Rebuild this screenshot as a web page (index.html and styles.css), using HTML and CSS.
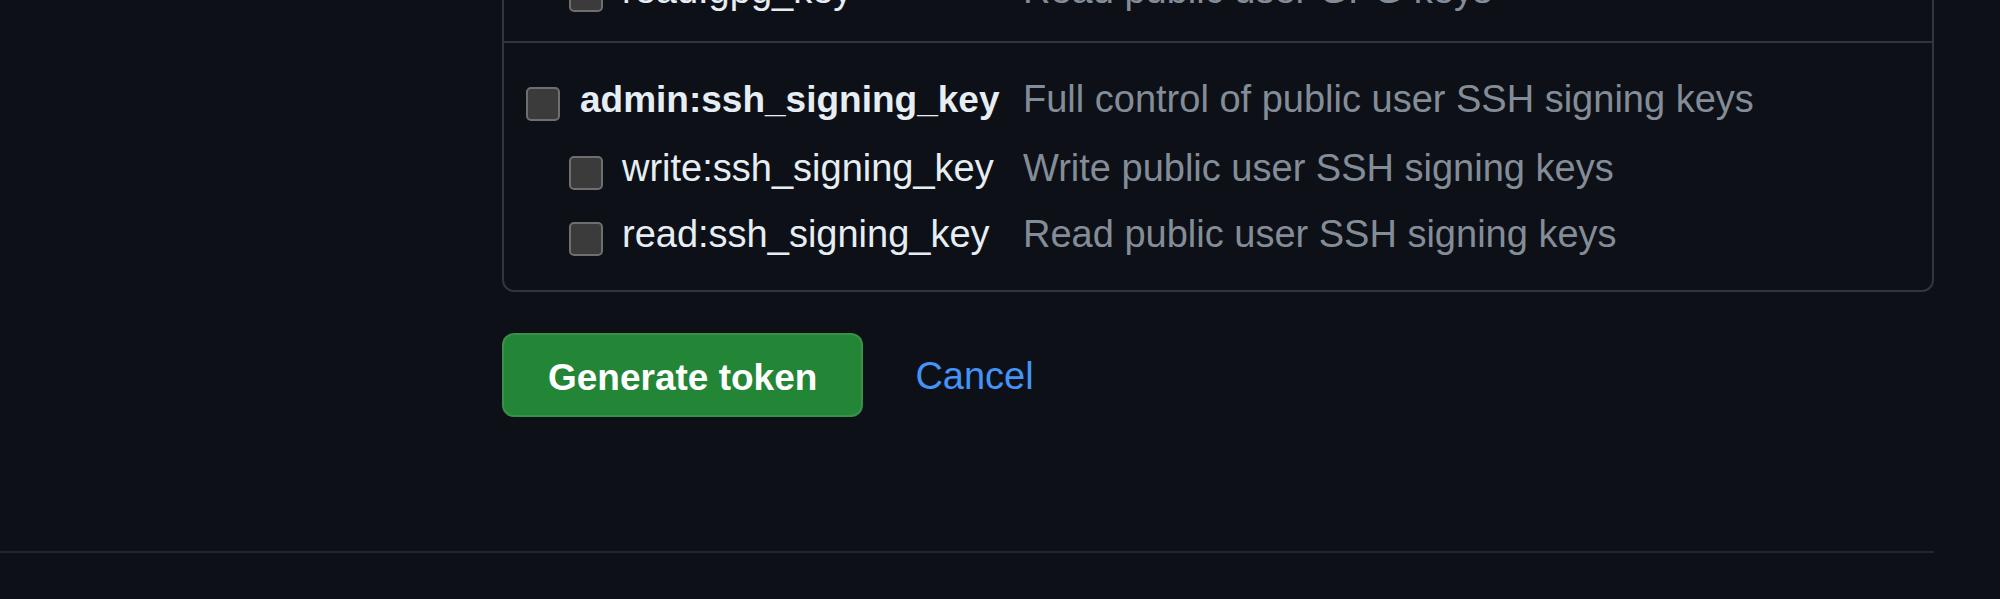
FILE: index.html
```html
<!DOCTYPE html>
<html lang="en">
<head>
<meta charset="utf-8">
<title>New personal access token</title>
<link rel="stylesheet" href="styles.css">
</head>
<body>
<div class="page">
  <div class="layout">
    <aside class="sidebar"></aside>
    <main class="content">
      <div class="scopes">
        <div class="scope-group">
          <div class="scope-row parent">
            <div class="name-col"><input type="checkbox" class="cb"><span class="name">admin:gpg_key</span></div>
            <span class="desc">Full control of public user GPG keys</span>
          </div>
          <div class="children">
            <div class="scope-row child">
              <div class="name-col"><input type="checkbox" class="cb"><span class="name">write:gpg_key</span></div>
              <span class="desc">Write public user GPG keys</span>
            </div>
            <div class="scope-row child">
              <div class="name-col"><input type="checkbox" class="cb"><span class="name">read:gpg_key</span></div>
              <span class="desc">Read public user GPG keys</span>
            </div>
          </div>
        </div>
        <div class="scope-group last">
          <div class="scope-row parent">
            <div class="name-col"><input type="checkbox" class="cb"><span class="name">admin:ssh_signing_key</span></div>
            <span class="desc">Full control of public user SSH signing keys</span>
          </div>
          <div class="children">
            <div class="scope-row child">
              <div class="name-col"><input type="checkbox" class="cb"><span class="name">write:ssh_signing_key</span></div>
              <span class="desc">Write public user SSH signing keys</span>
            </div>
            <div class="scope-row child">
              <div class="name-col"><input type="checkbox" class="cb"><span class="name">read:ssh_signing_key</span></div>
              <span class="desc">Read public user SSH signing keys</span>
            </div>
          </div>
        </div>
      </div>
      <div class="actions">
        <button type="button" class="btn-primary">Generate token</button>
        <a href="#" class="cancel">Cancel</a>
      </div>
    </main>
  </div>
  <footer class="footer"></footer>
</div>
</body>
</html>
```
FILE: styles.css
```css
* { box-sizing: border-box; }

html, body {
  margin: 0;
  padding: 0;
  background: #0d1117;
  overflow: hidden;
}

body {
  font-family: "Liberation Sans", Arial, sans-serif;
  color: #e6edf3;
}

.page {
  width: 1934px;
  margin-top: -203px;
}

.layout {
  display: flex;
}

.sidebar {
  width: 502px;
  flex: none;
}

.content {
  flex: 1;
}

.scopes {
  border: 2px solid #30363d;
  border-radius: 12px;
}

.scope-group {
  padding: 26px 0 15px 22px;
}

.scope-group + .scope-group {
  border-top: 2px solid #30363d;
}

.scope-group.last {
  padding-bottom: 20px;
}

.children {
  margin-top: 3px;
}

.scope-row {
  display: grid;
  grid-template-columns: 497px 1fr;
  align-items: center;
  height: 66px;
}

.name-col {
  display: flex;
  align-items: center;
  gap: 20px;
}

.child .name-col {
  padding-left: 43px;
  gap: 19px;
}

.cb {
  appearance: none;
  -webkit-appearance: none;
  margin: 4px 0 0 0;
  width: 34px;
  height: 34px;
  flex: none;
  background: #3b3b3b;
  border: 2px solid #6e6e6e;
  border-radius: 5px;
}

.name {
  font-size: 38px;
  white-space: nowrap;
  padding-bottom: 5px;
}

.parent .name {
  font-weight: 700;
  font-size: 37px;
}

.desc {
  font-size: 38px;
  color: #848d97;
  white-space: nowrap;
  padding-bottom: 5px;
}

.actions {
  margin-top: 41px;
  display: flex;
  align-items: center;
  gap: 52px;
}

.btn-primary {
  font-family: "Liberation Sans", Arial, sans-serif;
  font-size: 37px;
  font-weight: 700;
  line-height: 44px;
  color: #ffffff;
  background: #238636;
  border: 2px solid rgba(240, 246, 252, 0.1);
  border-radius: 12px;
  padding: 21px 44px 15px;
  height: 84px;
}

.cancel {
  font-size: 38px;
  color: #4493f8;
  text-decoration: none;
  padding-top: 3px;
}

.footer {
  margin-top: 134px;
  border-top: 2px solid #21262d;
  height: 40px;
}
```
